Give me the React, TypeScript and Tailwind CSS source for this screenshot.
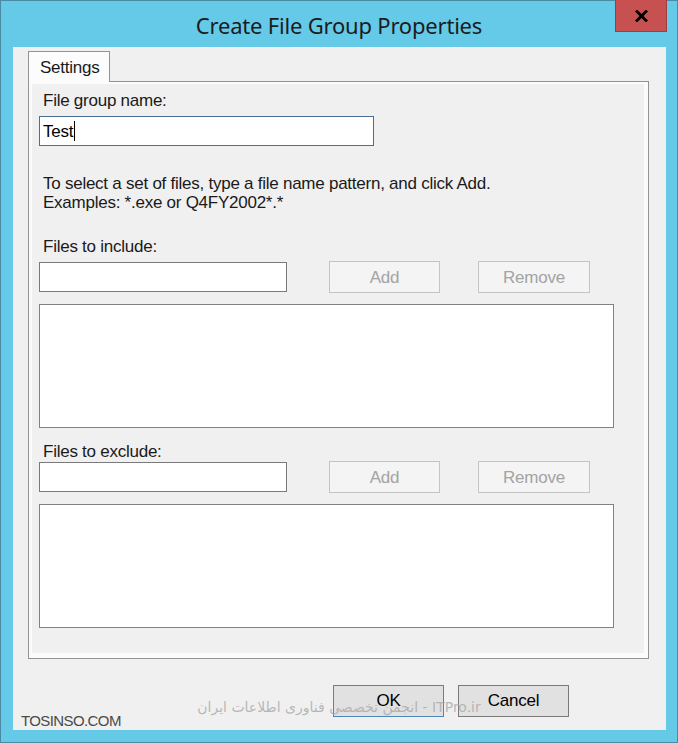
import React from "react";

const ui = { fontFamily: '"Liberation Sans", Arial, sans-serif' };

const TextBox = ({ width, value, focused }: { width: string; value?: string; focused?: boolean }) => (
  <div
    className={`${width} h-[30px] bg-white border flex items-center pl-[3px] text-[17px] tracking-[-0.25px] text-black ${
      focused ? "border-[#4a6f94]" : "border-[#7a7a7a]"
    }`}
  >
    {value}
    {focused && <span className="w-px h-[20px] bg-black ml-px" />}
  </div>
);

const DisabledButton = ({ label, width }: { label: string; width: string }) => (
  <div
    className={`${width} h-[32px] bg-[#f4f4f4] border border-[#c4c4c4] flex items-center justify-center text-[17px] tracking-[-0.25px] text-[#a3a3a3]`}
  >
    {label}
  </div>
);

const ListBox = () => <div className="w-[575px] h-[124px] bg-white border border-[#828282]" />;

export default function App() {
  return (
    <div
      className="w-[678px] h-[743px] bg-[#65c9e8] border border-[#4a8aa3] flex flex-col pl-[12px] pr-[11px] pb-[12px]"
      style={ui}
    >
      {/* title bar */}
      <div className="h-[46px] grid grid-cols-[1fr_auto_1fr] -ml-[12px] -mr-[11px]">
        <div />
        <div
          className="pt-[8px] text-[22px] tracking-[-0.2px] text-[#1c1c1c]"
          style={{ fontFamily: '"Noto Sans", "Open Sans", sans-serif' }}
        >
          Create File Group Properties
        </div>
        <div className="flex justify-end pr-[10px]">
          <div className="w-[52px] h-[32px] -mt-px bg-[#c75050] border border-[#9e3d3d] border-t-0 flex items-center justify-center">
            <svg width="13" height="12" viewBox="0 0 13 12">
              <path d="M2 1.5 L11 10.5 M11 1.5 L2 10.5" stroke="#000" strokeWidth="2.8" strokeLinecap="square" />
            </svg>
          </div>
        </div>
      </div>

      {/* client area */}
      <div className="relative flex-1 bg-[#f0f0f0] flex flex-col pl-[15px] pt-[4px]">
        {/* tab */}
        <div className="relative z-10 w-[82px] h-[31px] -mb-px bg-[#fcfcfc] border border-[#939393] border-b-0 pl-[11px] pt-[3px] text-[17px] tracking-[-0.25px] text-[#1a1a1a]">
          Settings
        </div>

        {/* tab panel */}
        <div className="w-[621px] h-[578px] border border-[#939393] bg-[#fbfbfb] pl-[3px] pr-[4px] pt-[2px] pb-[5px]">
          <div className="h-full bg-[#f0f0f0] pl-[7px] pt-[7px] flex flex-col text-[17px] tracking-[-0.25px] text-[#1a1a1a] leading-[19px]">
            <div className="pl-[4px]">File group name:</div>
            <div className="mt-[6px]">
              <TextBox width="w-[335px]" value="Test" focused />
            </div>

            <div className="pl-[4px] mt-[28px]">
              <div>To select a set of files, type a file name pattern, and click Add.</div>
              <div>Examples: *.exe or Q4FY2002*.*</div>
            </div>

            <div className="pl-[4px] mt-[25px]">Files to include:</div>
            <div className="mt-[5px] flex items-center h-[32px]">
              <TextBox width="w-[248px]" />
              <div className="ml-[42px]">
                <DisabledButton label="Add" width="w-[111px]" />
              </div>
              <div className="ml-[38px]">
                <DisabledButton label="Remove" width="w-[112px]" />
              </div>
            </div>
            <div className="mt-[11px]">
              <ListBox />
            </div>

            <div className="pl-[4px] mt-[14px]">Files to exclude:</div>
            <div className="mt-0 flex items-center h-[32px]">
              <TextBox width="w-[248px]" />
              <div className="ml-[42px]">
                <DisabledButton label="Add" width="w-[111px]" />
              </div>
              <div className="ml-[38px]">
                <DisabledButton label="Remove" width="w-[112px]" />
              </div>
            </div>
            <div className="mt-[11px]">
              <ListBox />
            </div>
          </div>
        </div>

        {/* dialog buttons */}
        <div className="mt-[26px] flex pl-[305px] gap-[14px]">
          <div className="w-[111px] h-[32px] bg-[#e1e1e1] border border-[#4f86b8] flex items-center justify-center text-[17px] tracking-[-0.25px] text-black">
            OK
          </div>
          <div className="w-[111px] h-[32px] bg-[#e1e1e1] border border-[#7a7a7a] flex items-center justify-center text-[17px] tracking-[-0.25px] text-black">
            Cancel
          </div>
        </div>

        {/* watermarks */}
        <div
          dir="rtl"
          className="absolute left-[183px] top-[650px] w-[286px] text-center text-[14px] text-[#a8a8a8]/80 whitespace-nowrap"
          style={{ fontFamily: '"DejaVu Sans", sans-serif' }}
        >
          ITPro.ir - انجمن تخصصی فناوری اطلاعات ایران
        </div>
        <div className="absolute left-[8px] -bottom-[2px] text-[15px] tracking-[-0.6px] text-[#4a4a4a]">TOSINSO.COM</div>
      </div>
    </div>
  );
}
